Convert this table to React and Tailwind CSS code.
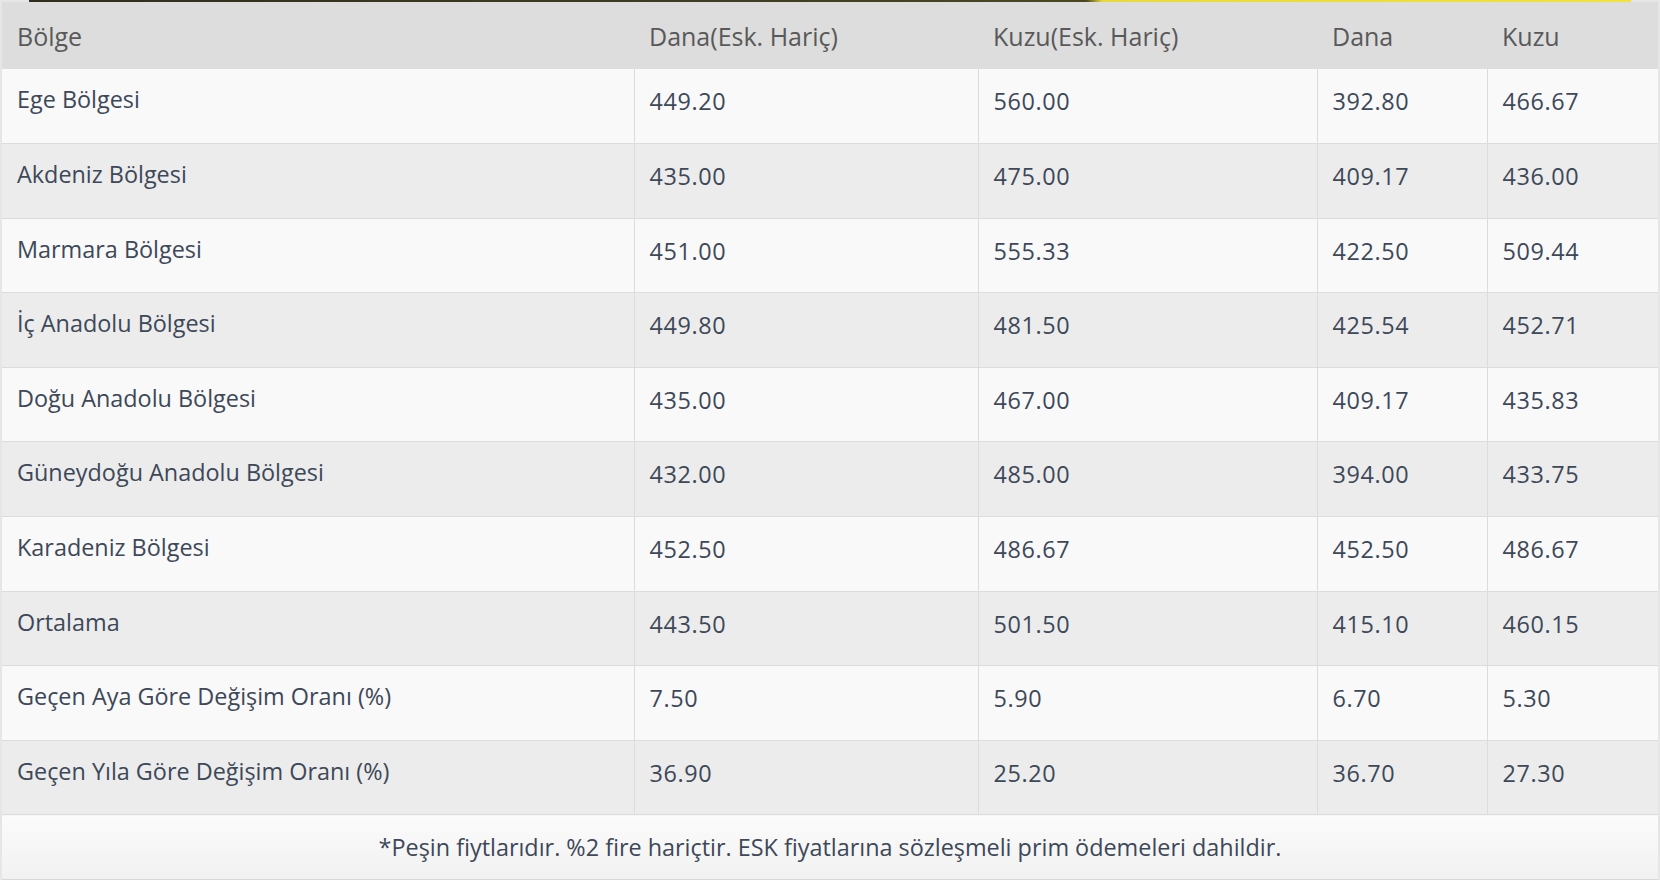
import React from "react";

const rows = [
  ["Ege Bölgesi", "449.20", "560.00", "392.80", "466.67"],
  ["Akdeniz Bölgesi", "435.00", "475.00", "409.17", "436.00"],
  ["Marmara Bölgesi", "451.00", "555.33", "422.50", "509.44"],
  ["İç Anadolu Bölgesi", "449.80", "481.50", "425.54", "452.71"],
  ["Doğu Anadolu Bölgesi", "435.00", "467.00", "409.17", "435.83"],
  ["Güneydoğu Anadolu Bölgesi", "432.00", "485.00", "394.00", "433.75"],
  ["Karadeniz Bölgesi", "452.50", "486.67", "452.50", "486.67"],
  ["Ortalama", "443.50", "501.50", "415.10", "460.15"],
  ["Geçen Aya Göre Değişim Oranı (%)", "7.50", "5.90", "6.70", "5.30"],
  ["Geçen Yıla Göre Değişim Oranı (%)", "36.90", "25.20", "36.70", "27.30"],
];

export default function App() {
  return (
    <div
      className="w-[1660px] h-[880px] bg-[#e6e6e6] overflow-hidden"
      style={{ fontFamily: '"Open Sans", "Noto Sans", sans-serif' }}
    >
      <div className="ml-[29px] w-[1602px] h-[2px] bg-[linear-gradient(90deg,#2f2e1c_0%,#3d3c22_40%,#4a4722_66%,#e9d93a_67%,#f2e23e_100%)]" />
      <table className="ml-[2px] w-[1656px] border-collapse table-fixed">
        <colgroup>
          <col className="w-[632px]" />
          <col className="w-[344px]" />
          <col className="w-[339px]" />
          <col className="w-[170px]" />
          <col className="w-[171px]" />
        </colgroup>
        <thead>
          <tr className="h-[67px] bg-[#dddddd]">
            {["Bölge", "Dana(Esk. Hariç)", "Kuzu(Esk. Hariç)", "Dana", "Kuzu"].map((h) => (
              <th
                key={h}
                className="text-left font-normal text-[25px] leading-[30px] text-[#595959] px-[15px] align-middle"
              >
                {h}
              </th>
            ))}
          </tr>
        </thead>
        <tbody>
          {rows.map((r, i) => (
            <tr
              key={i}
              className={`h-[74.6px] ${i % 2 === 0 ? "bg-[#f9f9f9]" : "bg-[#ececec]"} border-b border-[#dcdcdc]`}
            >
              {r.map((c, j) => (
                <td
                  key={j}
                  className={`align-top px-[15px] text-[23.4px] leading-[30px] text-[#3d4858] ${
                    j === 0 ? "pt-[15px]" : "pt-[17px] tracking-[0.6px] border-l border-[#dcdcdc]"
                  }`}
                >
                  {c}
                </td>
              ))}
            </tr>
          ))}
          <tr className="h-[65px]">
            <td
              colSpan={5}
              className="text-center align-middle text-[23.4px] leading-[30px] text-[#3d4858] bg-[linear-gradient(180deg,#fbfbfb,#f1f1f1)] border-b-2 border-[#d8d8d8]"
            >
              *Peşin fiytlarıdır. %2 fire hariçtir. ESK fiyatlarına sözleşmeli prim ödemeleri dahildir.
            </td>
          </tr>
        </tbody>
      </table>
    </div>
  );
}
